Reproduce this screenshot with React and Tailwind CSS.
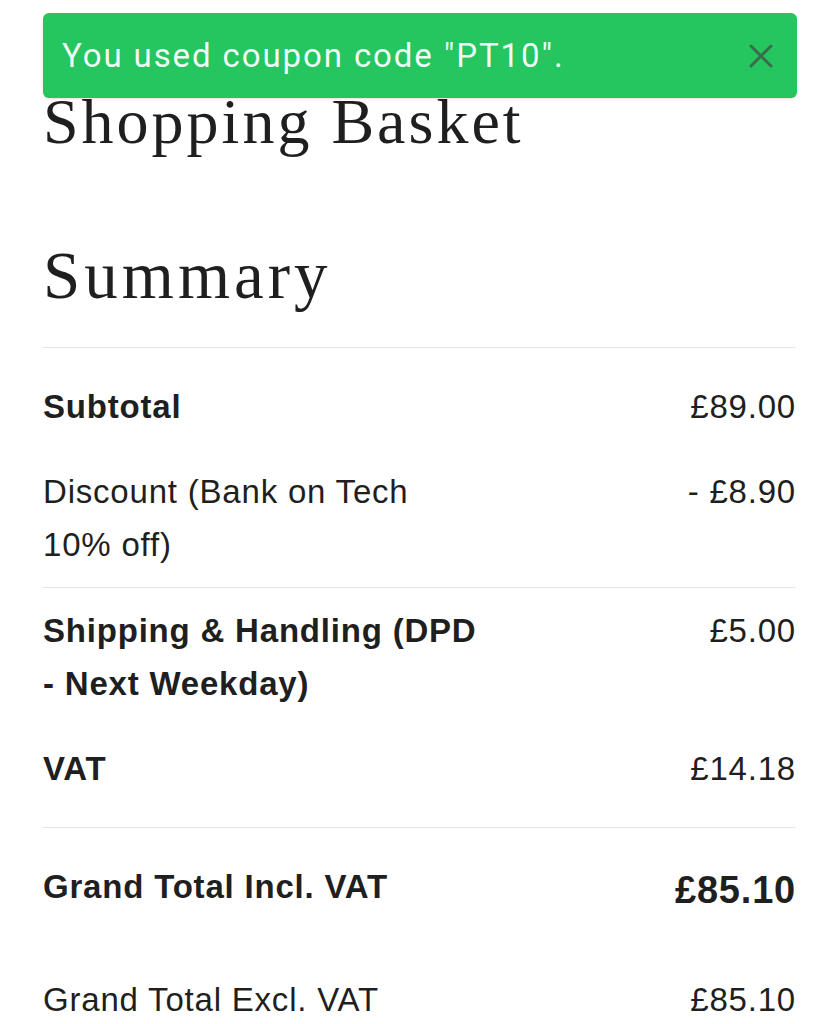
import React from 'react';

const sans = { fontFamily: '"Liberation Sans", Arial, sans-serif' };
const serif = { fontFamily: '"Liberation Serif", "Times New Roman", serif' };

function Row({ label, value, bold, className = '' }) {
  return (
    <div className={`flex items-start justify-between py-4 text-[33px] leading-[53px] tracking-[0.8px] text-[#1f1f1f] ${className}`}>
      <div className={`w-[436px] ${bold ? 'font-bold' : ''}`}>{label}</div>
      <div className="text-right">{value}</div>
    </div>
  );
}

export default function App() {
  return (
    <div className="relative min-h-[1024px] bg-white px-[43px]" style={sans}>
      {/* coupon toast */}
      <div className="absolute left-[43px] right-[42px] top-[13px] z-10 flex h-[85px] items-center justify-between rounded-md bg-[#25c560] pl-[19px] pr-[24px] shadow-sm">
        <span className="text-[33px] tracking-[1.9px] text-white/95" style={{ fontFamily: 'Roboto, sans-serif' }}>
          You used coupon code "PT10".
        </span>
        <button className="text-[#3d6a4c]">
          <svg width="24" height="24" viewBox="0 0 24 24" fill="none" stroke="currentColor" strokeWidth="3" strokeLinecap="round">
            <path d="M2 2L22 22M22 2L2 22" />
          </svg>
        </button>
      </div>

      <h1 className="pt-[85px] text-[64px] leading-[74px] tracking-[3px] text-[#1f1f1f]" style={serif}>
        Shopping Basket
      </h1>
      <h2 className="mt-[78px] text-[67px] leading-[76px] tracking-[4px] text-[#1f1f1f]" style={serif}>
        Summary
      </h2>

      <div className="mt-[34px] border-t border-[#e6e6e6] pt-4">
        <Row label="Subtotal" value="£89.00" bold />
        <Row label="Discount (Bank on Tech 10% off)" value="- £8.90" />
      </div>

      <div className="border-t border-[#e6e6e6] pb-4">
        <Row label="Shipping & Handling (DPD - Next Weekday)" value="£5.00" bold />
        <Row label="VAT" value="£14.18" bold />
      </div>

      <div className="border-t border-[#e6e6e6] pt-8">
        <div className="flex items-start justify-between text-[#1f1f1f] tracking-[0.8px]">
          <div className="w-[436px] text-[33px] font-bold leading-[53px]">Grand Total Incl. VAT</div>
          <div className="text-[38px] font-bold leading-[60px]">£85.10</div>
        </div>
        <Row label="Grand Total Excl. VAT" value="£85.10" className="mt-[53px] !py-0" />
      </div>
    </div>
  );
}
